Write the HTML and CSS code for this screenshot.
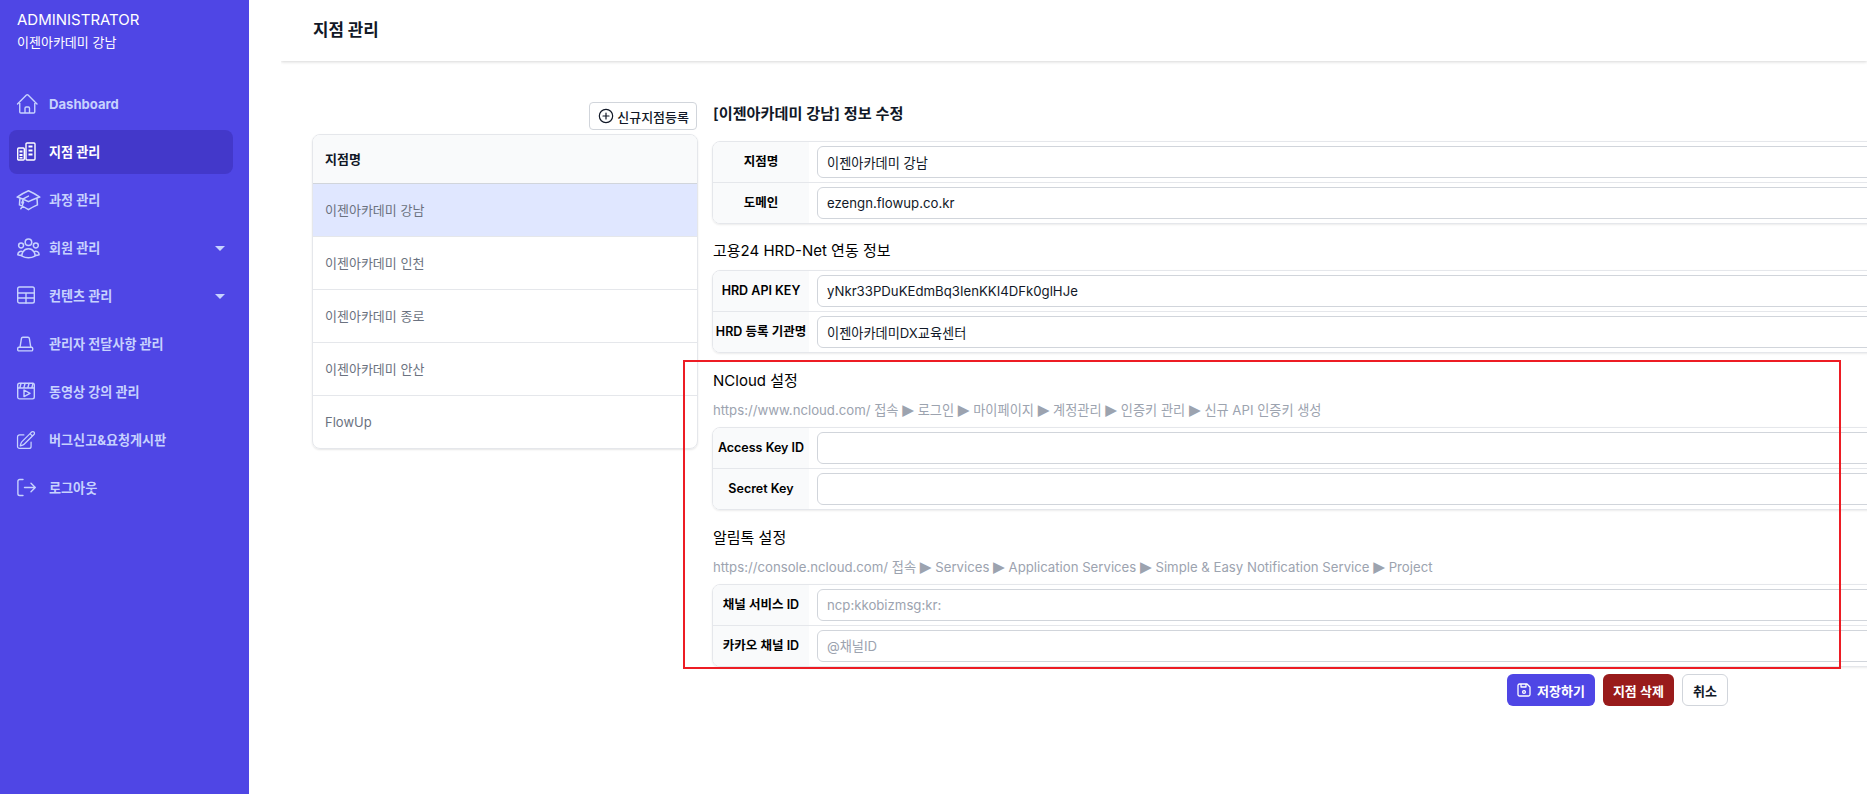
FILE: index.html
```html
<!DOCTYPE html>
<html lang="ko">
<head>
<meta charset="utf-8">
<title>지점 관리</title>
<link rel="stylesheet" href="styles.css">
</head>
<body>
<div class="app">
  <aside class="sidebar">
    <div class="brand">
      <div class="brand-role">ADMINISTRATOR</div>
      <div class="brand-name">이젠아카데미 강남</div>
    </div>
    <nav class="nav">
      <a class="nav-item"><svg class="ico" viewBox="1.75 0 24 24"><path d="m2.25 12 8.954-8.955c.44-.439 1.152-.439 1.591 0L21.75 12M4.5 9.75v10.125c0 .621.504 1.125 1.125 1.125H9.75v-4.875c0-.621.504-1.125 1.125-1.125h2.25c.621 0 1.125.504 1.125 1.125V21h4.125c.621 0 1.125-.504 1.125-1.125V9.75M8.25 21h8.25"/></svg><span>Dashboard</span></a>
      <a class="nav-item active"><svg class="ico" viewBox="0 0 24 24"><rect x="0.7" y="8" width="6.6" height="12" rx="1"/><rect x="9" y="3" width="9" height="17" rx="1"/><path class="fill" d="M2.5 10.5h3v2h-3zM2.5 14h3v2h-3zM2.5 17h3v1.5h-3zM11.5 5.5h4v2h-4zM11.5 9.5h4v2h-4zM11.5 13.5h4v2h-4z"/></svg><span>지점 관리</span></a>
      <a class="nav-item"><svg class="ico" viewBox="1.5 1 22 22"><path d="M4.26 10.147a60.438 60.438 0 0 0-.491 6.347A48.62 48.62 0 0 1 12 20.904a48.62 48.62 0 0 1 8.232-4.41 60.46 60.46 0 0 0-.491-6.347m-15.482 0a50.636 50.636 0 0 0-2.658-.813A59.906 59.906 0 0 1 12 3.493a59.903 59.903 0 0 1 10.399 5.84c-.896.248-1.783.52-2.658.814m-15.482 0A50.717 50.717 0 0 1 12 13.489a50.702 50.702 0 0 1 7.74-3.342M6.75 15a.75.75 0 1 0 0-1.5.75.75 0 0 0 0 1.5Zm0 0v-3.675A55.378 55.378 0 0 1 12 8.443m-7.007 11.55A5.981 5.981 0 0 0 6.75 15.75v-1.5"/></svg><span>과정 관리</span></a>
      <a class="nav-item"><svg class="ico" viewBox="1.5 1 22 22"><path d="M18 18.72a9.094 9.094 0 0 0 3.741-.479 3 3 0 0 0-4.682-2.72m.94 3.198.001.031c0 .225-.012.447-.037.666A11.944 11.944 0 0 1 12 21c-2.17 0-4.207-.576-5.963-1.584A6.062 6.062 0 0 1 6 18.719m12 0a5.971 5.971 0 0 0-.941-3.197m0 0A5.995 5.995 0 0 0 12 12.75a5.995 5.995 0 0 0-5.058 2.772m0 0a3 3 0 0 0-4.681 2.72 8.986 8.986 0 0 0 3.74.477m.94-3.197a5.971 5.971 0 0 0-.94 3.197M15 6.75a3 3 0 1 1-6 0 3 3 0 0 1 6 0Zm6 3a2.25 2.25 0 1 1-4.5 0 2.25 2.25 0 0 1 4.5 0Zm-13.5 0a2.25 2.25 0 1 1-4.5 0 2.25 2.25 0 0 1 4.5 0Z"/></svg><span>회원 관리</span><i class="caret"></i></a>
      <a class="nav-item"><svg class="ico" viewBox="0 0 24 24"><rect x="0.7" y="3" width="16.6" height="16" rx="1.8"/><path d="M0.7 9h16.6M0.7 14h16.6M9 9v10"/></svg><span>컨텐츠 관리</span><i class="caret"></i></a>
      <a class="nav-item"><svg class="ico" viewBox="0 0 24 24"><path d="M3 15.3 4.4 6.6a1.5 1.5 0 0 1 1.5-1.3h5a1.5 1.5 0 0 1 1.5 1.3L13.8 15.3"/><rect x="0.7" y="15.3" width="15" height="3.6" rx="1.2"/></svg><span>관리자 전달사항 관리</span></a>
      <a class="nav-item"><svg class="ico" viewBox="0 0 24 24"><rect x="0.7" y="3.3" width="16.6" height="15.6" rx="1.8"/><path d="M0.7 8h16.6M4 3.5 2.8 8M8 3.5 6.8 8M12 3.5 10.8 8M16 3.5 14.8 8M7 10v6.6l6-3.3z"/></svg><span>동영상 강의 관리</span></a>
      <a class="nav-item"><svg class="ico" viewBox="2.4 -1.7 26.6 26.6"><path d="m16.862 4.487 1.687-1.688a1.875 1.875 0 1 1 2.652 2.652L10.582 16.07a4.5 4.5 0 0 1-1.897 1.13L6 18l.8-2.685a4.5 4.5 0 0 1 1.13-1.897l8.932-8.931Zm0 0L19.5 7.125M18 14v4.75A2.25 2.25 0 0 1 15.75 21H5.25A2.25 2.25 0 0 1 3 18.75V8.25A2.25 2.25 0 0 1 5.25 6H10"/></svg><span>버그신고&amp;요청게시판</span></a>
      <a class="nav-item"><svg class="ico" viewBox="0 0 24 24"><path d="M6 3.5H2.7a1.8 1.8 0 0 0-1.8 1.8v12.4a1.8 1.8 0 0 0 1.8 1.8H6M7.5 11.5h10.8M14 7.2l4.3 4.3-4.3 4.3"/></svg><span>로그아웃</span></a>
    </nav>
  </aside>

  <main class="main">
    <header class="topbar"><h1>지점 관리</h1></header>
    <div class="content">
      <section class="branches">
        <div class="branches-tools">
          <button class="btn-new" type="button"><svg class="ico-plus" viewBox="0 0 24 24"><circle cx="12" cy="12" r="10"/><path d="M12 7.5v9M7.5 12h9"/></svg><span>신규지점등록</span></button>
        </div>
        <div class="list">
          <div class="list-head">지점명</div>
          <div class="list-row selected">이젠아카데미 강남</div>
          <div class="list-row">이젠아카데미 인천</div>
          <div class="list-row">이젠아카데미 종로</div>
          <div class="list-row">이젠아카데미 안산</div>
          <div class="list-row">FlowUp</div>
        </div>
      </section>

      <section class="editor">
        <h2 class="edit-title">[이젠아카데미 강남] 정보 수정</h2>
        <div class="fields">
          <div class="field"><label>지점명</label><input type="text" value="이젠아카데미 강남"></div>
          <div class="field"><label>도메인</label><input type="text" value="ezengn.flowup.co.kr"></div>
        </div>

        <h3 class="group-title">고용24 HRD-Net 연동 정보</h3>
        <div class="fields">
          <div class="field"><label>HRD API KEY</label><input type="text" value="yNkr33PDuKEdmBq3IenKKI4DFk0glHJe"></div>
          <div class="field"><label>HRD 등록 기관명</label><input type="text" value="이젠아카데미DX교육센터"></div>
        </div>

        <h3 class="group-title">NCloud 설정</h3>
        <p class="hint">https://www.ncloud.com/ 접속 <span class="arrow">▶</span> 로그인 <span class="arrow">▶</span> 마이페이지 <span class="arrow">▶</span> 계정관리 <span class="arrow">▶</span> 인증키 관리 <span class="arrow">▶</span> 신규 API 인증키 생성</p>
        <div class="fields">
          <div class="field"><label>Access Key ID</label><input type="text"></div>
          <div class="field"><label>Secret Key</label><input type="text"></div>
        </div>

        <h3 class="group-title">알림톡 설정</h3>
        <p class="hint">https://console.ncloud.com/ 접속 <span class="arrow">▶</span> Services <span class="arrow">▶</span> Application Services <span class="arrow">▶</span> Simple &amp; Easy Notification Service <span class="arrow">▶</span> Project</p>
        <div class="fields">
          <div class="field"><label>채널 서비스 ID</label><input type="text" placeholder="ncp:kkobizmsg:kr:"></div>
          <div class="field"><label>카카오 채널 ID</label><input type="text" placeholder="@채널ID"></div>
        </div>

        <div class="actions">
          <button class="btn btn-save" type="button"><svg class="ico-save" viewBox="0 0 14 14"><path d="M1 2.5A1.5 1.5 0 0 1 2.5 1H10l3 3v7.5a1.5 1.5 0 0 1-1.5 1.5h-9A1.5 1.5 0 0 1 1 11.5zM4 1v3h5V1"/><circle cx="7" cy="9" r="1.4"/></svg><span>저장하기</span></button>
          <button class="btn btn-delete" type="button">지점 삭제</button>
          <button class="btn btn-cancel" type="button">취소</button>
        </div>
      </section>
    </div>
  </main>
  <div class="highlight"></div>
</div>
</body>
</html>
```

FILE: styles.css
```css
* { box-sizing: border-box; }
html, body { margin: 0; height: 100%; overflow: hidden; background: #fff; }
body { font-family: Inter, "Noto Sans CJK KR", sans-serif; font-size: 13px; color: #111827; }
h1, h2, h3, p { margin: 0; }

.app { position: relative; display: flex; width: 1867px; height: 794px; overflow: hidden; }

.sidebar { flex: 0 0 249px; background: #4f46e5; color: #fff; padding: 10px 16px 0 9px; }
.brand { padding-left: 8px; height: 72px; }
.brand-role { font-size: 15px; line-height: 20px; }
.brand-name { font-size: 13px; line-height: 20px; margin-top: 2px; }
.nav { display: flex; flex-direction: column; gap: 4px; }
.nav-item { display: flex; align-items: center; height: 44px; padding: 0 8px; border-radius: 8px; color: #c7d2fe; font-weight: 700; font-size: 13.1px; line-height: 20px; }
.nav-item.active { background: #4338ca; color: #fff; }
.ico { flex: 0 0 24px; width: 24px; height: 24px; margin-right: 8px; fill: none; stroke: currentColor; stroke-width: 1.4; stroke-linecap: round; stroke-linejoin: round; overflow: visible; }
.ico .fill { fill: currentColor; stroke: none; }
.caret { margin-left: auto; width: 0; height: 0; border-left: 5px solid transparent; border-right: 5px solid transparent; border-top: 5px solid #c7d2fe; }

.main { flex: 1; min-width: 0; margin-left: 32px; overflow: hidden; }
.topbar { height: 61px; padding: 0 32px 3px; display: flex; align-items: center; background: #fff; box-shadow: 0 1px 3px rgba(0,0,0,.16); }
.topbar h1 { font-size: 16.8px; font-weight: 700; color: #111827; }

.content { display: flex; gap: 14px; padding: 41px 0 0 31px; }
.branches { flex: 0 0 386px; }
.branches-tools { display: flex; justify-content: flex-end; padding-right: 1px; margin-bottom: 4px; }
.btn-new { display: flex; align-items: center; gap: 3px; height: 28px; padding: 0 7px 0 8px; background: #fff; border: 1px solid #d1d5db; border-radius: 4px; font: 500 13px Inter, "Noto Sans CJK KR", sans-serif; color: #111827; }
.ico-plus { width: 16px; height: 16px; fill: none; stroke: #111827; stroke-width: 1.8; stroke-linecap: round; }

.list { border: 1px solid #e5e7eb; border-radius: 8px; overflow: hidden; box-shadow: 0 1px 2px rgba(0,0,0,.1); }
.list-head { height: 49px; display: flex; align-items: center; padding: 0 12px; line-height: 20px; background: #f9fafb; font-weight: 600; font-size: 13px; border-bottom: 1px solid #d1d5db; }
.list-row { height: 53px; display: flex; align-items: center; padding: 0 12px; line-height: 20px; font-size: 13px; color: #6b7280; border-top: 1px solid #e5e7eb; }
.list-head + .list-row { border-top: 0; height: 52px; }
.list-row.selected { background: #e0e7ff; }

.editor { flex: 0 0 1811px; }
.edit-title { height: 20px; margin-bottom: 19px; padding-left: 1px; display: flex; align-items: center; font-size: 15.2px; font-weight: 600; }
.group-title { height: 20px; margin: 17px 0 9px; padding-left: 1px; font-size: 15px; line-height: 20px; font-weight: 400; color: #000; }
.hint { height: 20px; margin: 0 0 7px; padding-left: 1px; font-size: 13.2px; line-height: 20px; color: #9ca3af; white-space: nowrap; }
.arrow { font-family: "DejaVu Sans", sans-serif; font-size: 15.3px; }
.group-title:has(+ .hint) { margin: 18px 0 10px; height: 19px; }

.fields { border: 1px solid #e5e7eb; border-radius: 8px; overflow: hidden; box-shadow: 0 1px 2px rgba(0,0,0,.08); }
.field { display: flex; height: 40px; }
.field + .field { height: 41px; border-top: 1px solid #e5e7eb; }
.field label { flex: 0 0 96px; display: flex; align-items: center; justify-content: center; line-height: 20px; background: #f9fafb; font-size: 12.5px; font-weight: 600; white-space: nowrap; color: #000; }
.field input { flex: 1; min-width: 0; height: 32px; margin: 4px 0 4px 8px; padding: 0 9px; border: 1px solid #d1d5db; border-radius: 6px; font: 400 13.2px Inter, "Noto Sans CJK KR", sans-serif; color: #111827; background: #fff; outline: 0; }
.field input::placeholder { color: #9ca3af; }

.actions { display: flex; justify-content: center; gap: 8px; margin-top: 7px; }
.btn { display: flex; align-items: center; gap: 6px; height: 32px; padding: 0 10px; border: 0; border-radius: 6px; font: 600 13px Inter, "Noto Sans CJK KR", sans-serif; white-space: nowrap; }
.btn-save { background: #4f46e5; color: #fff; }
.btn-delete { background: #991b1b; color: #fff; }
.btn-cancel { background: #fff; color: #111827; border: 1px solid #d1d5db; }
.ico-save { width: 14px; height: 14px; fill: none; stroke: #fff; stroke-width: 1.3; stroke-linejoin: round; }

.highlight { position: absolute; left: 683px; top: 360px; width: 1158px; height: 309px; border: 2px solid #ed1c24; pointer-events: none; }
```
